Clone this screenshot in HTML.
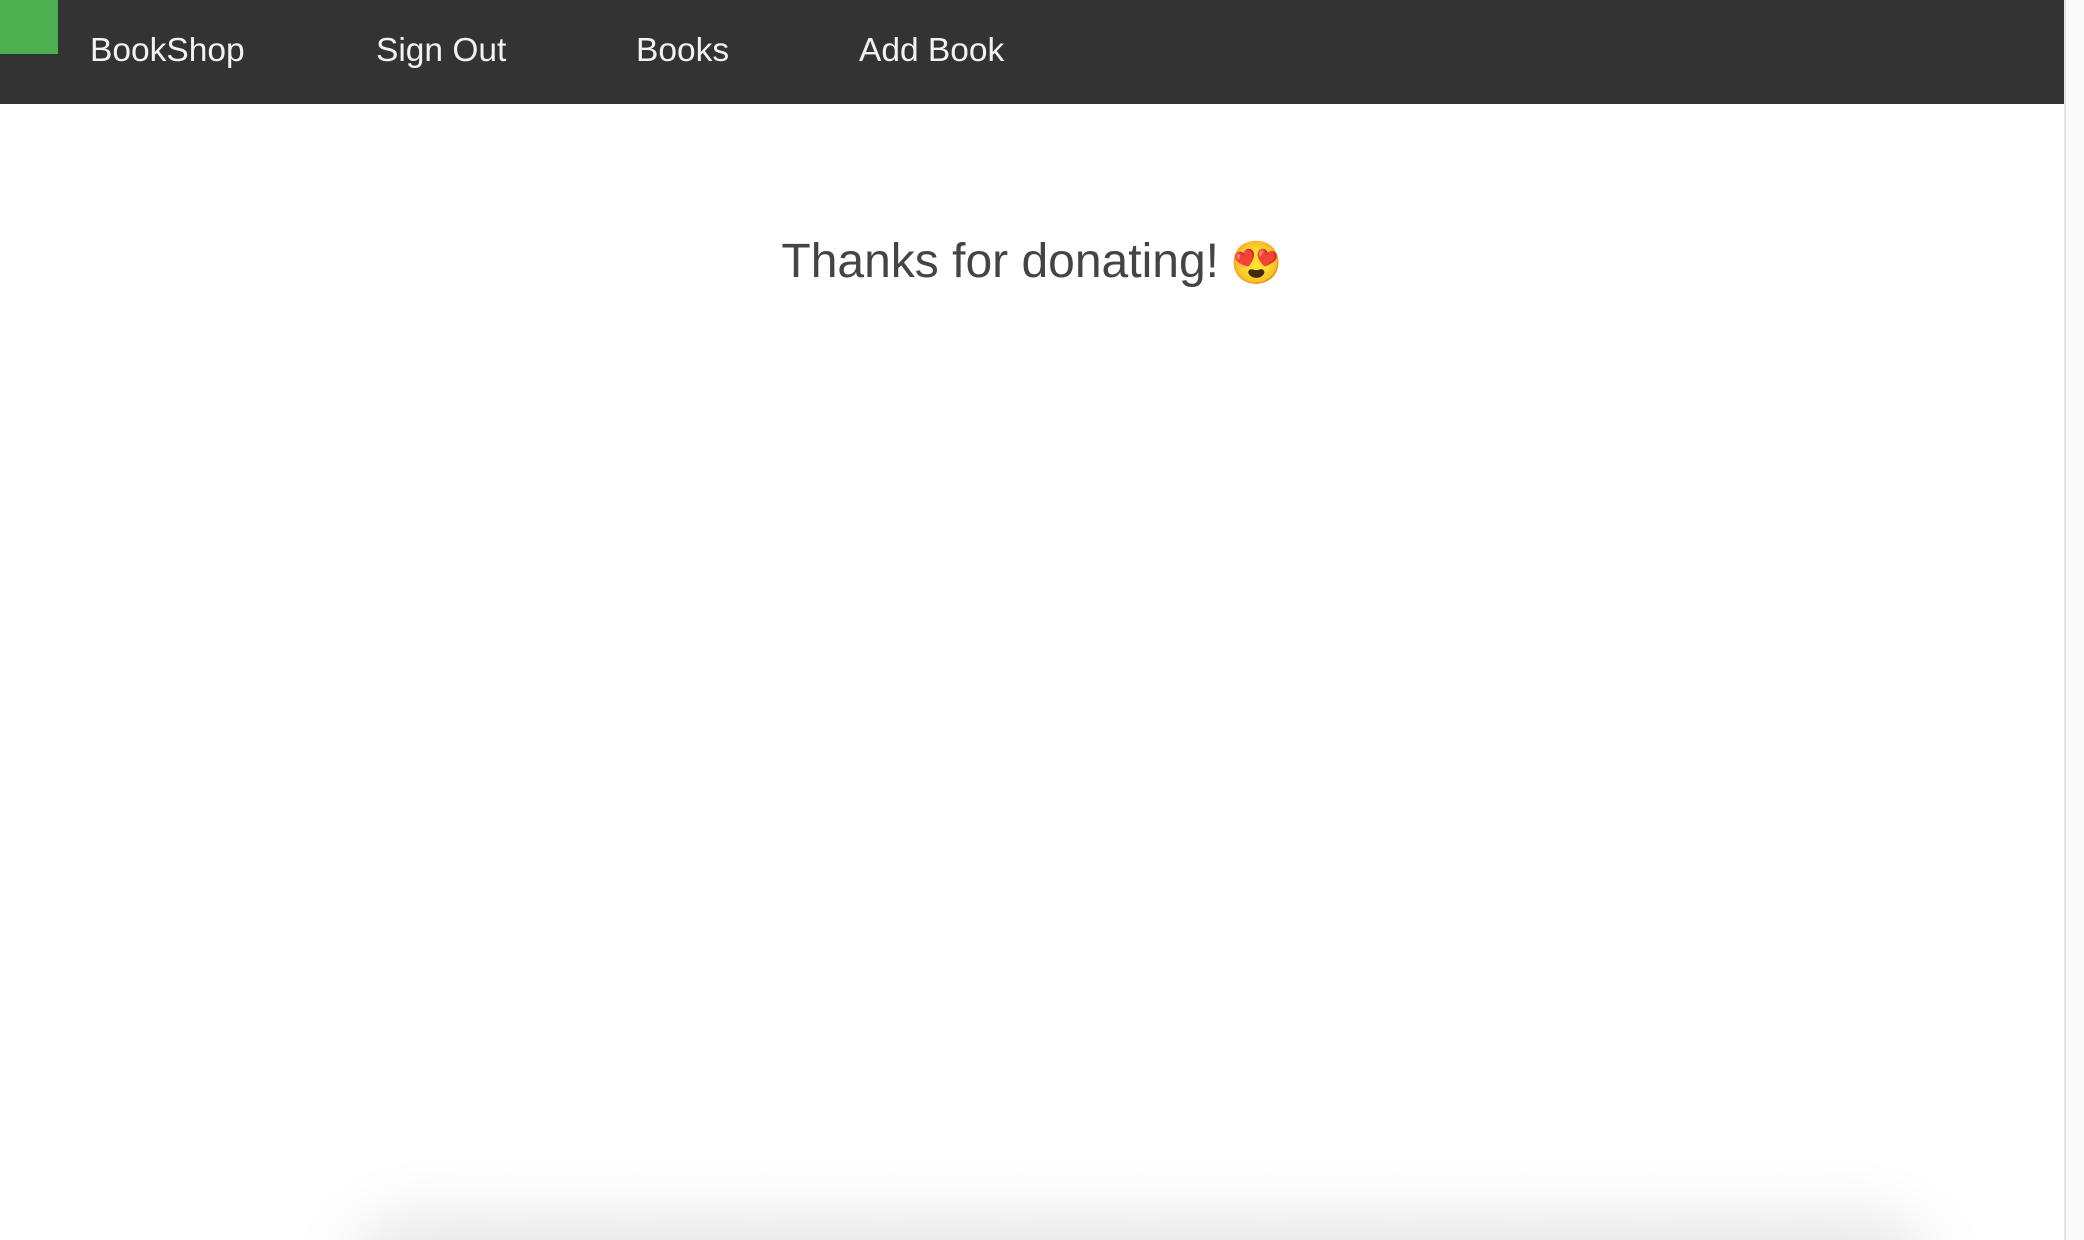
<!DOCTYPE html>
<html><head><meta charset="utf-8"><style>
html,body{margin:0;padding:0;width:2084px;height:1240px;overflow:hidden;background:#fff;font-family:"Liberation Sans",Arial,sans-serif;}
.main{position:absolute;left:0;top:0;width:2064px;height:1240px;background:#fff;overflow:hidden}
.sb{position:absolute;left:2064px;top:0;width:20px;height:1240px;background:#fafafa;border-left:2px solid #e6e6e6;box-sizing:border-box}
.nav{position:absolute;left:0;top:0;width:2064px;height:104px;background:#333}
.green{position:absolute;left:0;top:0;width:58px;height:54px;background:#4caf50}
.nav a{position:absolute;top:29px;color:#f2f2f2;font-size:33.5px;line-height:44px;text-decoration:none;white-space:nowrap}
h1{position:absolute;left:0;width:2064px;top:230px;margin:0;text-align:center;font-weight:normal;font-size:48px;line-height:64px;color:#444;white-space:nowrap}
h1 span{margin-left:-2px;font-size:42px;font-family:"Noto Color Emoji","DejaVu Sans",sans-serif}
.shadow{position:absolute;left:380px;width:1520px;top:1250px;height:60px;box-shadow:0 0 70px 30px rgba(0,0,0,0.11);border-radius:30px;background:#ddd}
</style></head><body>
<div class="main">
<div class="nav"><div class="green"></div>
<a style="left:90px">BookShop</a>
<a style="left:376px">Sign Out</a>
<a style="left:636px">Books</a>
<a style="left:859px">Add Book</a>
</div>
<h1>Thanks for donating! <span>😍</span></h1>
<div class="shadow"></div>
</div>
<div class="sb"></div>
</body></html>
